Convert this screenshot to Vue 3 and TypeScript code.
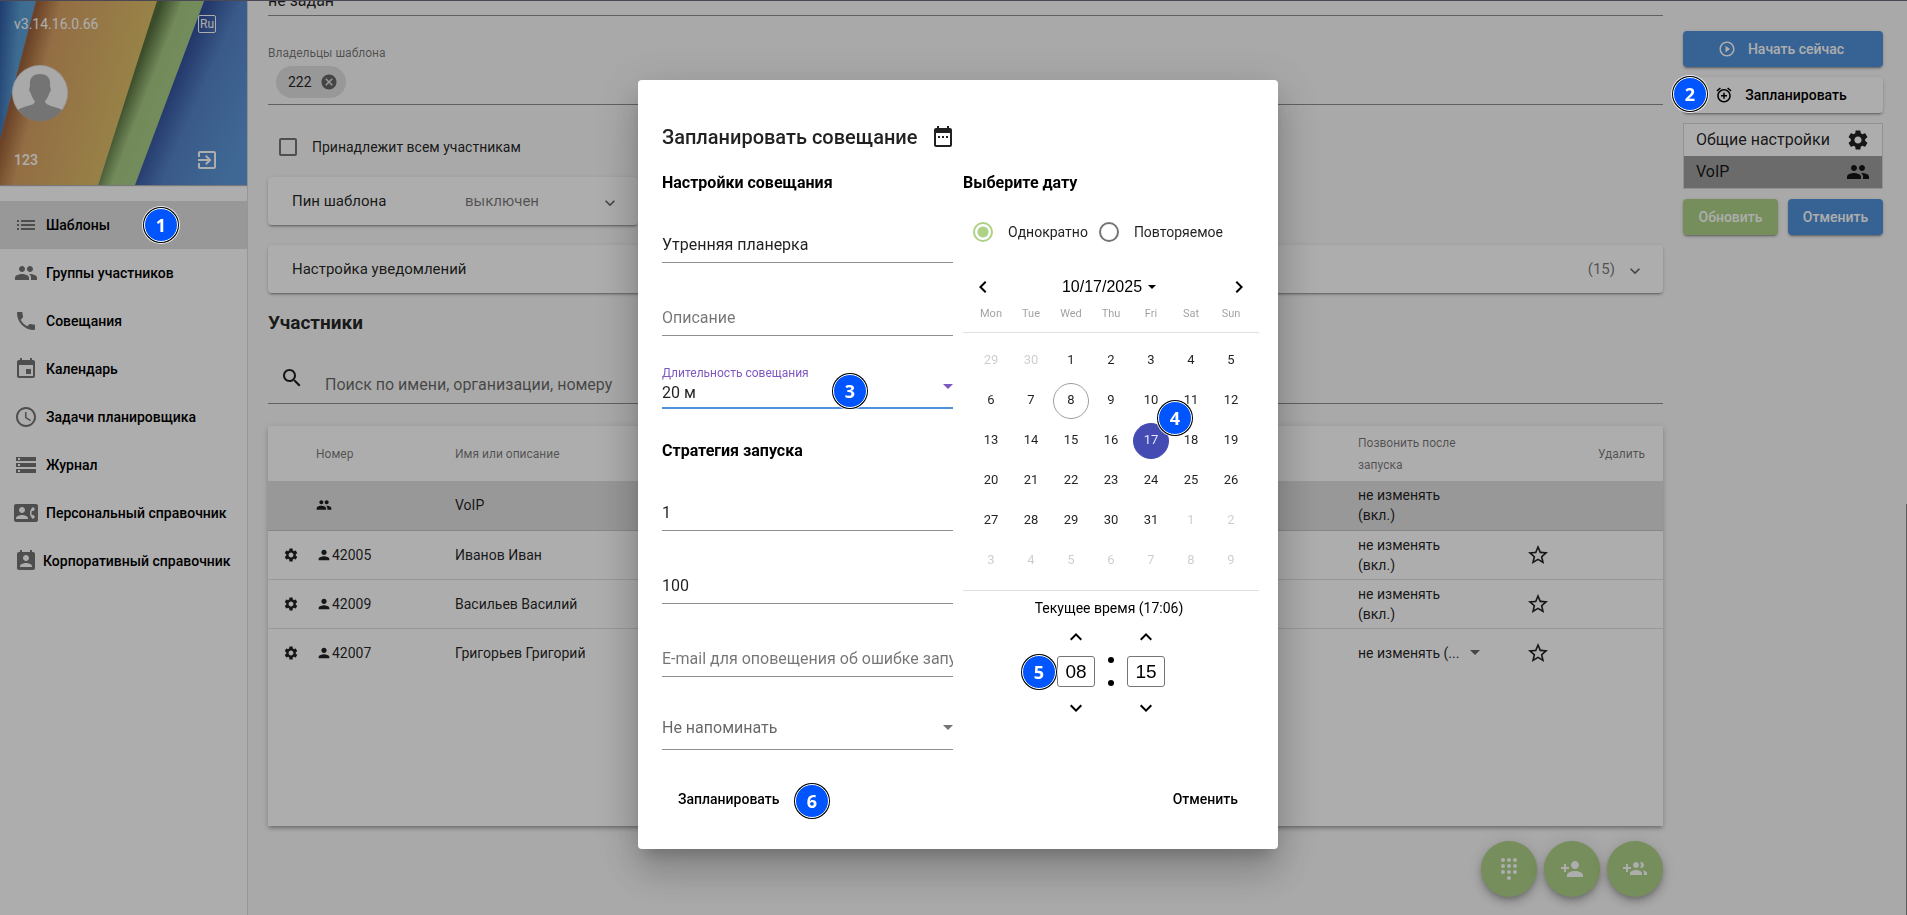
<script setup lang="ts">
import { ref } from 'vue'

const icons: Record<string, string> = {
  list: 'M3 13h2v-2H3v2zm0 4h2v-2H3v2zm0-8h2V7H3v2zm4 4h14v-2H7v2zm0 4h14v-2H7v2zM7 7v2h14V7H7z',
  group: 'M16 11c1.66 0 2.99-1.34 2.99-3S17.66 5 16 5c-1.66 0-3 1.34-3 3s1.34 3 3 3zm-8 0c1.66 0 2.99-1.34 2.99-3S9.66 5 8 5C6.34 5 5 6.34 5 8s1.34 3 3 3zm0 2c-2.33 0-7 1.17-7 3.5V19h14v-2.5c0-2.33-4.67-3.5-7-3.5zm8 0c-.29 0-.62.02-.97.05 1.16.84 1.97 1.97 1.97 3.45V19h6v-2.5c0-2.33-4.67-3.5-7-3.5z',
  phone: 'M20 15.5c-1.25 0-2.45-.2-3.57-.57-.35-.11-.74-.03-1.02.24l-2.2 2.2c-2.83-1.44-5.15-3.75-6.59-6.59l2.2-2.21c.28-.26.36-.65.25-1C8.7 6.45 8.5 5.25 8.5 4c0-.55-.45-1-1-1H4c-.55 0-1 .45-1 1 0 9.39 7.61 17 17 17 .55 0 1-.45 1-1v-3.5c0-.55-.45-1-1-1z',
  event: 'M17 12h-5v5h5v-5zM16 1v2H8V1H6v2H5c-1.11 0-1.99.9-1.99 2L3 19c0 1.1.89 2 2 2h14c1.1 0 2-.9 2-2V5c0-1.1-.9-2-2-2h-1V1h-2zm3 18H5V8h14v11z',
  clock: 'M11.99 2C6.47 2 2 6.48 2 12s4.47 10 9.99 10C17.52 22 22 17.52 22 12S17.52 2 11.99 2zM12 20c-4.42 0-8-3.58-8-8s3.58-8 8-8 8 3.58 8 8-3.58 8-8 8zm.5-13H11v6l5.25 3.15.75-1.23-4.5-2.67z',
  storage: 'M2 20h20v-4H2v4zm2-3h2v2H4v-2zM2 4v4h20V4H2zm4 3H4V5h2v2zm-4 7h20v-4H2v4zm2-3h2v2H4v-2z',
  contactPhone: 'M22 3H2C.9 3 0 3.9 0 5v14c0 1.1.9 2 2 2h20c1.1 0 1.99-.9 1.99-2L24 5c0-1.1-.9-2-2-2zM8 6c1.66 0 3 1.34 3 3s-1.34 3-3 3-3-1.34-3-3 1.34-3 3-3zm6 12H2v-1c0-2 4-3.1 6-3.1s6 1.1 6 3.1v1zm3.85-4h1.64L21 16l-1.99 1.99c-1.31-.98-2.28-2.38-2.73-3.99-.18-.64-.28-1.31-.28-2s.1-1.36.28-2c.45-1.62 1.42-3.01 2.73-3.99L21 8l-1.51 2h-1.64c-.22.63-.35 1.3-.35 2s.13 1.37.35 2z',
  contactCalendar: 'M19 3h-1V1h-2v2H8V1H6v2H5c-1.11 0-2 .9-2 2v14c0 1.1.89 2 2 2h14c1.1 0 2-.9 2-2V5c0-1.1-.9-2-2-2zm-7 3c1.66 0 3 1.34 3 3s-1.34 3-3 3-3-1.34-3-3 1.34-3 3-3zm6 12H6v-1c0-2 4-3.1 6-3.1s6 1.1 6 3.1v1z',
  exit: 'M10.09 15.59L11.5 17l5-5-5-5-1.41 1.41L12.67 11H3v2h9.67l-2.58 2.59zM19 3H5c-1.11 0-2 .9-2 2v4h2V5h14v14H5v-4H3v4c0 1.1.89 2 2 2h14c1.1 0 2-.9 2-2V5c0-1.1-.9-2-2-2z',
  cancel: 'M12 2C6.47 2 2 6.47 2 12s4.47 10 10 10 10-4.47 10-10S17.53 2 12 2zm5 13.59L15.59 17 12 13.41 8.41 17 7 15.59 10.59 12 7 8.41 8.41 7 12 10.59 15.59 7 17 8.41 13.41 12 17 15.59z',
  search: 'M15.5 14h-.79l-.28-.27C15.41 12.59 16 11.11 16 9.5 16 5.91 13.09 3 9.5 3S3 5.91 3 9.5 5.91 16 9.5 16c1.61 0 3.09-.59 4.23-1.57l.27.28v.79l5 4.99L20.49 19l-4.99-5zm-6 0C7.01 14 5 11.99 5 9.5S7.01 5 9.5 5 14 7.01 14 9.5 11.99 14 9.5 14z',
  gear: 'M19.14 12.94c.04-.3.06-.61.06-.94 0-.32-.02-.64-.07-.94l2.03-1.58c.18-.14.23-.41.12-.61l-1.92-3.32c-.12-.22-.37-.29-.59-.22l-2.39.96c-.5-.38-1.03-.7-1.62-.94l-.36-2.54c-.04-.24-.24-.41-.48-.41h-3.84c-.24 0-.43.17-.47.41l-.36 2.54c-.59.24-1.13.57-1.62.94l-2.39-.96c-.22-.08-.47 0-.59.22L2.74 8.87c-.12.21-.08.47.12.61l2.03 1.58c-.05.3-.09.63-.09.94s.02.64.07.94l-2.03 1.58c-.18.14-.23.41-.12.61l1.92 3.32c.12.22.37.29.59.22l2.39-.96c.5.38 1.03.7 1.62.94l.36 2.54c.05.24.24.41.48.41h3.84c.24 0 .44-.17.47-.41l.36-2.54c.59-.24 1.13-.56 1.62-.94l2.39.96c.22.08.47 0 .59-.22l1.92-3.32c.12-.22.07-.47-.12-.61l-2.01-1.58zM12 15.6c-1.98 0-3.6-1.62-3.6-3.6s1.62-3.6 3.6-3.6 3.6 1.62 3.6 3.6-1.62 3.6-3.6 3.6z',
  person: 'M12 12c2.21 0 4-1.79 4-4s-1.79-4-4-4-4 1.79-4 4 1.79 4 4 4zm0 2c-2.67 0-8 1.34-8 4v2h16v-2c0-2.66-5.33-4-8-4z',
  star: 'M22 9.24l-7.19-.62L12 2 9.19 8.63 2 9.24l5.46 4.73L5.82 21 12 17.27 18.18 21l-1.63-7.03L22 9.24zM12 15.4l-3.76 2.27 1-4.28-3.32-2.88 4.38-.38L12 6.1l1.71 4.04 4.38.38-3.32 2.88 1 4.28L12 15.4z',
  play: 'M10 16.5l6-4.5-6-4.5v9zM12 2C6.48 2 2 6.48 2 12s4.48 10 10 10 10-4.48 10-10S17.52 2 12 2zm0 18c-4.41 0-8-3.59-8-8s3.59-8 8-8 8 3.59 8 8-3.59 8-8 8z',
  alarm: 'M7.88 3.39L6.6 1.86 2 5.71l1.29 1.53 4.59-3.85zM22 5.72l-4.6-3.86-1.29 1.53 4.6 3.86L22 5.72zM12 4c-4.97 0-9 4.03-9 9s4.02 9 9 9c4.97 0 9-4.03 9-9s-4.03-9-9-9zm0 16c-3.87 0-7-3.13-7-7s3.13-7 7-7 7 3.13 7 7-3.13 7-7 7zm1-11h-2v3H8v2h3v3h2v-3h3v-2h-3V9z',
  dialpad: 'M12 19c-1.1 0-2 .9-2 2s.9 2 2 2 2-.9 2-2-.9-2-2-2zM6 1c-1.1 0-2 .9-2 2s.9 2 2 2 2-.9 2-2-.9-2-2-2zm0 6c-1.1 0-2 .9-2 2s.9 2 2 2 2-.9 2-2-.9-2-2-2zm0 6c-1.1 0-2 .9-2 2s.9 2 2 2 2-.9 2-2-.9-2-2-2zm12-8c1.1 0 2-.9 2-2s-.9-2-2-2-2 .9-2 2 .9 2 2 2zm-6 8c-1.1 0-2 .9-2 2s.9 2 2 2 2-.9 2-2-.9-2-2-2zm6 0c-1.1 0-2 .9-2 2s.9 2 2 2 2-.9 2-2-.9-2-2-2zm0-6c-1.1 0-2 .9-2 2s.9 2 2 2 2-.9 2-2-.9-2-2-2zm-6 0c-1.1 0-2 .9-2 2s.9 2 2 2 2-.9 2-2-.9-2-2-2zm0-6c-1.1 0-2 .9-2 2s.9 2 2 2 2-.9 2-2-.9-2-2-2z',
  personAdd: 'M15 12c2.21 0 4-1.79 4-4s-1.79-4-4-4-4 1.79-4 4 1.79 4 4 4zm-9-2V7H4v3H1v2h3v3h2v-3h3v-2H6zm9 4c-2.67 0-8 1.34-8 4v2h16v-2c0-2.66-5.33-4-8-4z',
  groupAdd: 'M8 10H5V7H3v3H0v2h3v3h2v-3h3v-2zm10 1c1.66 0 2.99-1.34 2.99-3S19.66 5 18 5c-.32 0-.63.05-.91.14.57.81.9 1.79.9 2.86s-.34 2.04-.9 2.86c.28.09.59.14.91.14zm-5 0c1.66 0 2.99-1.34 2.99-3S14.66 5 13 5c-1.66 0-3 1.34-3 3s1.34 3 3 3zm6.62 2.16c.83.73 1.38 1.66 1.38 2.84v2h3v-2c0-1.54-2.37-2.49-4.38-2.84zM13 13c-2 0-6 1-6 3v2h12v-2c0-2-4-3-6-3z',
  dateRange: 'M7 11h2v2H7v-2zm4 0h2v2h-2v-2zm4 0h2v2h-2v-2zM19 3h-1V1h-2v2H8V1H6v2H5c-1.11 0-1.99.9-1.99 2L3 20c0 1.1.89 2 2 2h14c1.1 0 2-.9 2-2V5c0-1.1-.9-2-2-2zm0 17H5V8h14v12z',
  down: 'M7.41 8.59L12 13.17l4.59-4.58L18 10l-6 6-6-6z',
  up: 'M7.41 15.41L12 10.83l4.59 4.58L18 14l-6-6-6 6z',
  left: 'M15.41 7.41L14 6l-6 6 6 6 1.41-1.41L10.83 12z',
  right: 'M8.59 16.59L13.17 12 8.59 7.41 10 6l6 6-6 6z',
}

interface NavItem { icon: string; label: string; active?: boolean; step?: number; long?: boolean }
const nav: NavItem[] = [
  { icon: 'list', label: 'Шаблоны', active: true, step: 1 },
  { icon: 'group', label: 'Группы участников' },
  { icon: 'phone', label: 'Совещания' },
  { icon: 'event', label: 'Календарь' },
  { icon: 'clock', label: 'Задачи планировщика' },
  { icon: 'storage', label: 'Журнал' },
  { icon: 'contactPhone', label: 'Персональный справочник' },
  { icon: 'contactCalendar', label: 'Корпоративный справочник', long: true },
]

const people = [
  { number: '42005', name: 'Иванов Иван', select: false },
  { number: '42009', name: 'Васильев Василий', select: false },
  { number: '42007', name: 'Григорьев Григорий', select: true },
]

const weekdays = ['Mon', 'Tue', 'Wed', 'Thu', 'Fri', 'Sat', 'Sun']
const days = Array.from({ length: 42 }, (_, i) => {
  const n = i - 1
  if (n < 1) return { n: n + 30, out: true }
  if (n > 31) return { n: n - 31, out: true }
  return { n, out: false }
})

const today = 8
const selected = ref(17)
const title = ref('Утренняя планерка')
const description = ref('')
const duration = ref('20 м')
const attempts = ref('1')
const interval = ref('100')
const email = ref('')
const remind = ref('Не напоминать')
const mode = ref('once')
const hours = ref('08')
const minutes = ref('15')
const shared = ref(false)
const query = ref('')
</script>

<template>
  <div class="page">
    <aside class="sidebar">
      <header class="banner">
        <svg class="art" viewBox="0 0 247 184" preserveAspectRatio="none" aria-hidden="true">
          <defs>
            <linearGradient id="sky" x1="0" y1="0" x2="1" y2="0.25">
              <stop offset="0" stop-color="#2f5ba5" /><stop offset="0.5" stop-color="#5b9fd6" /><stop offset="1" stop-color="#62a6da" />
            </linearGradient>
            <linearGradient id="sand" gradientUnits="userSpaceOnUse" x1="18" y1="80" x2="125" y2="108">
              <stop offset="0" stop-color="#a0643c" /><stop offset="0.2" stop-color="#d9a265" /><stop offset="1" stop-color="#e0c069" />
            </linearGradient>
            <linearGradient id="leaf" gradientUnits="userSpaceOnUse" x1="127" y1="90" x2="163" y2="104">
              <stop offset="0" stop-color="#56703e" /><stop offset="0.5" stop-color="#a9cb85" /><stop offset="1" stop-color="#abcf87" />
            </linearGradient>
            <linearGradient id="sea" gradientUnits="userSpaceOnUse" x1="168" y1="90" x2="250" y2="126">
              <stop offset="0" stop-color="#33529c" /><stop offset="0.35" stop-color="#5685ca" /><stop offset="1" stop-color="#5e9adb" />
            </linearGradient>
          </defs>
          <path fill="url(#sky)" d="M0 0H40L0 140Z" />
          <path fill="url(#sand)" d="M36 0H158L98 184H0V138Z" />
          <path fill="url(#leaf)" d="M157 0H204L136 184H98Z" />
          <path fill="url(#sea)" d="M204 0H247V184H135Z" />
        </svg>
        <div class="banner-row version">
          <span>v3.14.16.0.66</span>
          <button class="lang" type="button">Ru</button>
        </div>
        <svg class="avatar" viewBox="0 0 56 56" aria-hidden="true">
          <circle cx="28" cy="28" r="28" fill="#e4e4e4" />
          <circle cx="28" cy="28" r="27" fill="#fafafa" />
          <path fill="#ababab" d="M18 21c-1-8 3-12 10-12s11 4 10 12l1 4-2 4c-1 4-3 5-4 8 1 4 13 5 17 8A27 27 0 0 1 6 45c4-4 16-4 17-8-1-3-3-4-4-8l-2-4Z" />
        </svg>
        <div class="banner-row">
          <span>123</span>
          <button class="plain" type="button" aria-label="Выход"><svg class="i24" viewBox="0 0 24 24"><path :d="icons.exit" /></svg></button>
        </div>
      </header>
      <nav>
        <a v-for="n in nav" :key="n.label" href="#" class="nav-item" :class="{ active: n.active, long: n.long }">
          <svg class="i24" viewBox="0 0 24 24"><path :d="icons[n.icon]" /></svg>
          <span>{{ n.label }}</span>
          <b v-if="n.step" class="marker step-nav">{{ n.step }}</b>
        </a>
      </nav>
    </aside>

    <main>
      <div class="line-field first">не задан</div>
      <div class="owners">
        <span class="caption">Владельцы шаблона</span>
        <span class="chip">222<button class="plain" type="button" aria-label="Удалить владельца"><svg viewBox="0 0 24 24"><path :d="icons.cancel" /></svg></button></span>
      </div>
      <label class="check"><input v-model="shared" type="checkbox">Принадлежит всем участникам</label>
      <button type="button" class="panel half">
        <span class="panel-title">Пин шаблона</span><span class="muted">выключен</span>
        <svg class="i20" viewBox="0 0 24 24"><path :d="icons.down" /></svg>
      </button>
      <button type="button" class="panel">
        <span class="panel-title">Настройка уведомлений</span><span class="muted count">(15)</span>
        <svg class="i20" viewBox="0 0 24 24"><path :d="icons.down" /></svg>
      </button>
      <h2>Участники</h2>
      <div class="search">
        <svg class="i24" viewBox="0 0 24 24"><path :d="icons.search" /></svg>
        <input v-model="query" type="text" aria-label="Поиск" placeholder="Поиск по имени, организации, номеру">
      </div>
      <section class="card">
        <table>
          <thead>
            <tr>
              <th class="c-set"></th><th class="c-num">Номер</th><th>Имя или описание</th>
              <th class="c-call">Позвонить после<br>запуска</th><th class="c-fav"></th><th class="c-del">Удалить</th>
            </tr>
          </thead>
          <tbody>
            <tr class="current">
              <td></td>
              <td><svg class="i16" viewBox="0 0 24 24"><path :d="icons.group" /></svg></td>
              <td>VoIP</td><td class="call">не изменять<br>(вкл.)</td><td></td><td></td>
            </tr>
            <tr v-for="p in people" :key="p.number">
              <td class="set"><button class="plain" type="button" aria-label="Настройки участника"><svg class="i16" viewBox="0 0 24 24"><path :d="icons.gear" /></svg></button></td>
              <td><span class="num"><svg class="i16" viewBox="0 0 24 24"><path :d="icons.person" /></svg>{{ p.number }}</span></td>
              <td>{{ p.name }}</td>
              <td class="call">
                <button v-if="p.select" class="plain call-select" type="button">не изменять (...<i class="caret"></i></button>
                <template v-else>не изменять<br>(вкл.)</template>
              </td>
              <td class="fav"><button class="plain" type="button" aria-label="В избранное"><svg class="i24" viewBox="0 0 24 24"><path :d="icons.star" /></svg></button></td>
              <td></td>
            </tr>
          </tbody>
        </table>
      </section>
      <div class="fabs">
        <button v-for="f in ['dialpad', 'personAdd', 'groupAdd']" :key="f" type="button" :aria-label="f">
          <svg class="i24" viewBox="0 0 24 24"><path :d="icons[f]" /></svg>
        </button>
      </div>
    </main>

    <aside class="actions">
      <button type="button" class="btn blue lead"><svg viewBox="0 0 24 24"><path :d="icons.play" /></svg>Начать сейчас</button>
      <button type="button" class="btn white lead"><svg viewBox="0 0 24 24"><path :d="icons.alarm" /></svg>Запланировать<b class="marker step-plan">2</b></button>
      <ul>
        <li>Общие настройки<svg class="i24" viewBox="0 0 24 24"><path :d="icons.gear" /></svg></li>
        <li class="on">VoIP<svg class="i24" viewBox="0 0 24 24"><path :d="icons.group" /></svg></li>
      </ul>
      <div class="pair">
        <button type="button" class="btn green">Обновить</button>
        <button type="button" class="btn blue">Отменить</button>
      </div>
    </aside>
    <i class="thumb"></i>
  </div>

  <div class="backdrop"></div>

  <div class="overlay">
    <form class="dialog" role="dialog" aria-labelledby="dlg-title" @submit.prevent>
      <h1 id="dlg-title">Запланировать совещание<svg class="i24" viewBox="0 0 24 24"><path :d="icons.dateRange" /></svg></h1>
      <div class="columns">
        <div class="left">
          <h3>Настройки совещания</h3>
          <div class="fields">
            <div class="field"><input v-model="title" type="text" aria-label="Название"></div>
            <div class="field"><input v-model="description" type="text" aria-label="Описание" placeholder="Описание"></div>
            <div class="field focus">
              <label for="duration">Длительность совещания</label>
              <select id="duration" v-model="duration"><option>20 м</option></select>
              <i class="caret"></i>
              <b class="marker step-length">3</b>
            </div>
          </div>
          <h3 class="second">Стратегия запуска</h3>
          <div class="fields">
            <div class="field"><input v-model="attempts" type="text" aria-label="Количество попыток"></div>
            <div class="field"><input v-model="interval" type="text" aria-label="Интервал"></div>
            <div class="field"><input v-model="email" type="email" aria-label="E-mail" placeholder="E-mail для оповещения об ошибке запуска"></div>
            <div class="field remind">
              <select v-model="remind" aria-label="Напоминание"><option>Не напоминать</option></select>
              <i class="caret"></i>
            </div>
          </div>
        </div>
        <div class="right">
          <h3>Выберите дату</h3>
          <div class="radios">
            <label><input v-model="mode" type="radio" name="mode" value="once">Однократно</label>
            <label><input v-model="mode" type="radio" name="mode" value="repeat">Повторяемое</label>
          </div>
          <div class="cal-head">
            <button class="plain" type="button" aria-label="Предыдущий месяц"><svg class="i24" viewBox="0 0 24 24"><path :d="icons.left" /></svg></button>
            <button class="plain period" type="button">10/{{ selected }}/2025<i class="caret small"></i></button>
            <button class="plain" type="button" aria-label="Следующий месяц"><svg class="i24" viewBox="0 0 24 24"><path :d="icons.right" /></svg></button>
          </div>
          <div class="week"><span v-for="w in weekdays" :key="w">{{ w }}</span></div>
          <div class="days">
            <button
              v-for="(d, i) in days" :key="i" type="button" class="plain day"
              :class="{ out: d.out, today: !d.out && d.n === today, selected: !d.out && d.n === selected }"
            >{{ d.n }}<b v-if="!d.out && d.n === 17" class="marker step-day">4</b></button>
          </div>
          <p class="now">Текущее время (17:06)</p>
          <div class="time">
            <div class="spin">
              <button class="plain" type="button" aria-label="Час вперёд"><svg class="i24" viewBox="0 0 24 24"><path :d="icons.up" /></svg></button>
              <div class="box"><input v-model="hours" type="text" aria-label="Часы"><b class="marker step-time">5</b></div>
              <button class="plain" type="button" aria-label="Час назад"><svg class="i24" viewBox="0 0 24 24"><path :d="icons.down" /></svg></button>
            </div>
            <div class="colon"><i></i><i></i></div>
            <div class="spin">
              <button class="plain" type="button" aria-label="Минута вперёд"><svg class="i24" viewBox="0 0 24 24"><path :d="icons.up" /></svg></button>
              <div class="box"><input v-model="minutes" type="text" aria-label="Минуты"></div>
              <button class="plain" type="button" aria-label="Минута назад"><svg class="i24" viewBox="0 0 24 24"><path :d="icons.down" /></svg></button>
            </div>
          </div>
        </div>
      </div>
      <footer>
        <button type="submit" class="flat">Запланировать<b class="marker step-save">6</b></button>
        <button type="button" class="flat">Отменить</button>
      </footer>
    </form>
  </div>
</template>

<style>
body { margin: 0; background: #fafafa; overflow: hidden; }
</style>

<style scoped>
* { box-sizing: border-box; }
button, input, select { font: inherit; color: inherit; margin: 0; }
button { cursor: pointer; }
svg { fill: currentColor; flex: none; display: block; }
.i24 { width: 24px; height: 24px; }
.i20 { width: 20px; height: 20px; }
.i16 { width: 16px; height: 16px; }
.plain { background: none; border: 0; padding: 0; }

.page {
  position: relative;
  display: flex;
  height: 100vh;
  overflow: hidden;
  border-top: 1px solid #6c6a7c;
  font: 14px/20px Roboto, sans-serif;
  color: rgba(0, 0, 0, .87);
  background: #fafafa;
}
.thumb { position: absolute; right: 0; top: 55%; bottom: 0; width: 1px; background: #868686; }

.sidebar { width: 248px; flex: none; border-right: 1px solid #dedede; background: #fff; }
.banner {
  position: relative;
  height: 184px;
  padding: 11px 28px 13px 14px;
  display: flex;
  flex-direction: column;
  justify-content: space-between;
  color: #fff;
  box-shadow: 0 1px 1px rgba(0, 0, 0, .3);
}
.art { position: absolute; inset: 0; width: 100%; height: 100%; }
.banner-row { position: relative; display: flex; justify-content: space-between; align-items: center; height: 24px; font-weight: 500; }
.version { font-weight: 400; }
.lang { width: 18px; height: 18px; margin-right: 3px; padding: 0; border: 1px solid #fff; border-radius: 2px; background: none; font: 12px/14px Roboto, sans-serif; }
.avatar { position: relative; width: 56px; height: 56px; margin: 2px 0 0 -2px; }
nav { padding-top: 16px; }
.nav-item {
  position: relative;
  display: flex;
  align-items: center;
  gap: 8px;
  height: 48px;
  padding-left: 14px;
  color: #000;
  font-size: 14px;
  font-weight: 500;
  text-decoration: none;
}
.nav-item svg { color: #737373; }
.nav-item.long { gap: 5px; }
.active { background: #e0e0e0; }

main { flex: 1; min-width: 0; padding: 0 20px; display: flex; flex-direction: column; }
.first { height: 15px; flex: none; display: flex; align-items: flex-end; padding-bottom: 4px; border-bottom: 1px solid #8f8f8f; font-size: 16px; }
.owners { flex: none; height: 89px; border-bottom: 1px solid #8f8f8f; padding: 27px 0 6px; display: flex; flex-direction: column; justify-content: space-between; align-items: flex-start; }
.caption { font-size: 12px; color: rgba(0, 0, 0, .54); }
.chip { display: flex; align-items: center; gap: 8px; height: 32px; margin-left: 8px; padding: 0 8px 0 12px; border-radius: 16px; background: #e0e0e0; }
.chip svg { width: 18px; height: 18px; color: #666; }
.check { display: flex; align-items: center; gap: 15px; height: 36px; margin: 24px 0 12px 11px; flex: none; }
.check input { appearance: none; width: 18px; height: 18px; border: 2px solid #757575; border-radius: 2px; }
.panel {
  flex: none;
  display: flex;
  align-items: center;
  width: 100%;
  height: 48px;
  margin-bottom: 20px;
  padding: 0 18px 0 24px;
  border: 0;
  border-radius: 4px;
  background: #fff;
  text-align: left;
  box-shadow: 0 3px 1px -2px rgba(0, 0, 0, .2), 0 2px 2px rgba(0, 0, 0, .14), 0 1px 5px rgba(0, 0, 0, .12);
}
.panel.half { width: 370px; }
.panel-title { width: 173px; font-size: 15px; white-space: nowrap; }
.panel .muted { color: rgba(0, 0, 0, .54); font-size: 15px; }
.panel .count { margin-left: auto; margin-right: 10px; }
.panel.half .muted { margin-right: auto; }
.panel svg { color: #666; margin-top: 4px; }
h2 { flex: none; margin: 0; font-size: 19px; font-weight: 700; line-height: 20px; }
.search { flex: none; display: flex; align-items: center; gap: 21px; height: 71px; padding: 32px 0 0 12px; border-bottom: 1px solid #8f8f8f; }
.search svg { margin-bottom: 12px; }
.search input { flex: 1; height: 32px; padding: 0; border: 0; background: none; outline: 0; font-size: 16px; }
.search input::placeholder { color: rgba(0, 0, 0, .6); opacity: 1; }
.card { flex: none; height: 400px; margin-top: 22px; background: #fff; box-shadow: 0 3px 3px -2px rgba(0, 0, 0, .2), 0 3px 4px rgba(0, 0, 0, .14), 0 1px 8px rgba(0, 0, 0, .12); }
table { width: 100%; border-collapse: collapse; table-layout: fixed; }
th { height: 55px; padding: 0; text-align: left; font-size: 12px; font-weight: 400; line-height: 22px; color: rgba(0, 0, 0, .54); }
.c-set { width: 48px; }
.c-num { width: 139px; }
.c-call { width: 168px; }
.c-fav { width: 72px; }
.c-del { width: 65px; }
td { height: 49px; padding: 0; font-size: 14px; vertical-align: middle; border-bottom: 1px solid #e0e0e0; }
tr:last-child td { border-bottom: 0; }
.current { background: #e0e0e0; }
.current td { border-bottom-color: #c8c8c8; }
.set .plain, .fav .plain { display: block; }
.set svg { margin-left: 15px; }
.num { display: flex; align-items: center; }
.call-select { display: flex; align-items: center; gap: 11px; }
.fabs { display: flex; justify-content: flex-end; gap: 7px; margin-top: 15px; }
.fabs button { width: 56px; height: 56px; padding: 0 16px; border: 0; border-radius: 50%; background: #add187; color: #fff; box-shadow: 0 3px 5px -1px rgba(0, 0, 0, .2), 0 6px 10px rgba(0, 0, 0, .14), 0 1px 18px rgba(0, 0, 0, .12); }

.actions { flex: none; width: 224px; padding: 30px 24px 0 0; display: flex; flex-direction: column; gap: 10px; }
.btn {
  position: relative;
  display: flex;
  align-items: center;
  justify-content: center;
  gap: 12px;
  width: 100%;
  height: 36px;
  padding: 0;
  border: 0;
  border-radius: 4px;
  font-weight: 500;
  color: #fff;
  box-shadow: 0 3px 1px -2px rgba(0, 0, 0, .2), 0 2px 2px rgba(0, 0, 0, .14), 0 1px 5px rgba(0, 0, 0, .12);
}
.btn.lead { padding-right: 4px; }
.btn svg { width: 18px; height: 18px; }
.blue { background: #5292da; }
.green { background: #add187; }
.white { background: #fff; color: #000; }
.actions ul { margin: 0; padding: 0; list-style: none; border: 1px solid #d8d8d8; background: #fff; font-size: 16px; }
.actions li { display: flex; align-items: center; justify-content: space-between; height: 32px; padding: 0 12px; }
.actions .on { background: #9e9e9e; }
.pair { display: flex; gap: 10px; }

.backdrop { position: fixed; inset: 0; z-index: 10; background: rgba(0, 0, 0, .32); }
.overlay { position: fixed; inset: 0; z-index: 11; display: flex; align-items: center; justify-content: center; padding: 14px 0 0 9px; pointer-events: none; }
.dialog {
  width: 640px;
  padding: 24px 19px 32px 24px;
  border-radius: 4px;
  background: #fff;
  color: rgba(0, 0, 0, .87);
  font: 14px/20px Roboto, sans-serif;
  pointer-events: auto;
  box-shadow: 0 11px 15px -7px rgba(0, 0, 0, .2), 0 24px 38px 3px rgba(0, 0, 0, .14), 0 9px 46px 8px rgba(0, 0, 0, .12);
}
h1 { display: flex; align-items: center; gap: 14px; height: 66px; margin: 0 0 3px; font-size: 20px; font-weight: 500; }
.columns { display: flex; gap: 10px; }
.left { flex: 1; min-width: 0; }
.right { width: 296px; }
h3 { margin: 0; font-size: 16px; font-weight: 700; line-height: 20px; color: #000; }
.second { margin-top: 32px; }
.fields { display: flex; flex-direction: column; gap: 13px; padding-top: 10px; }
.field { position: relative; display: flex; align-items: flex-end; height: 60px; padding-bottom: 7px; border-bottom: 1px solid #8f8f8f; }
.field input, .field select { width: 100%; height: 20px; padding: 0; border: 0; outline: 0; background: none; appearance: none; font-size: 16px; line-height: 20px; }
.field input::placeholder { color: rgba(0, 0, 0, .54); opacity: 1; }
.focus { flex-direction: column; align-items: flex-start; justify-content: flex-end; padding-bottom: 4px; border-bottom: 2px solid #5292da; }
.focus label { font-size: 12px; color: #7e57c2; }
.remind { align-items: center; padding: 16px 0 0; color: rgba(0, 0, 0, .6); }
.caret { flex: none; border: 5px solid transparent; border-top-color: currentColor; border-bottom: 0; width: 0; height: 0; }
.call-select .caret { color: #666; }
.field .caret { position: absolute; right: 0; top: 35px; color: #757575; }
.focus .caret { color: #7e57c2; }

.radios { display: flex; gap: 11px; height: 40px; margin: 19px 0 0 10px; align-items: center; }
.radios label { display: flex; align-items: center; gap: 15px; font-size: 14px; }
.radios input { appearance: none; width: 20px; height: 20px; border: 2px solid #757575; border-radius: 50%; }
.radios input:checked { border-color: #add187; background: radial-gradient(circle, #add187 5px, transparent 6px); }
.cal-head { display: flex; justify-content: space-between; align-items: center; height: 24px; margin-top: 23px; padding: 0 8px; color: #000; }
.period { display: flex; align-items: center; gap: 6px; padding-right: 4px; font: 16px/20px "Liberation Sans", Arial, sans-serif; }
.caret.small { border-width: 4px; border-bottom: 0; }
.week, .days { display: grid; grid-template-columns: repeat(7, 40px); padding: 0 8px; text-align: center; }
.week { height: 34px; padding-top: 5px; font-size: 11px; color: rgba(0, 0, 0, .38); border-bottom: 1px solid #e0e0e0; }
.days { height: 258px; padding-top: 8px; padding-bottom: 9px; border-bottom: 1px solid #e0e0e0; }
.day { position: relative; z-index: 0; height: 38px; margin-bottom: 2px; font-size: 13px; }
.day.out { color: rgba(0, 0, 0, .2); }
.today::before, .selected::before { content: ''; position: absolute; z-index: -1; box-sizing: border-box; width: 36px; height: 36px; top: 2px; left: 2px; border-radius: 50%; border: 1px solid #9e9e9e; }
.day.selected { color: rgba(255, 255, 255, .87); z-index: 1; }
.selected::before { background: #444bb2; border-color: #444bb2; }
.now { margin: 7px 0 0; padding-right: 4px; text-align: center; color: #000; }
.time { display: flex; justify-content: center; color: #000; }
.spin { display: flex; flex-direction: column; align-items: center; width: 38px; padding-top: 7px; }
.box { position: relative; margin: 7px 0 9px; }
.box input { display: block; width: 38px; height: 31px; padding: 0; border: 1px solid #757575; border-radius: 3px; text-align: center; outline: 0; font: 19px/24px "Liberation Sans", Arial, sans-serif; }
.colon { display: flex; flex-direction: column; align-items: center; gap: 17px; width: 32px; padding-top: 39px; }
.colon i { width: 6px; height: 6px; border-radius: 50%; background: #000; }

footer { display: flex; justify-content: space-between; margin-top: 31px; padding-right: 5px; }
.flat { position: relative; height: 36px; padding: 0 16px; border: 0; background: none; font-weight: 500; color: #000; }

.marker {
  position: absolute;
  z-index: 20;
  width: 34px;
  height: 34px;
  border-radius: 50%;
  border: 1px solid #fff;
  background: #05f;
  box-shadow: 0 0 0 1px #000, 0 0 0 2px rgba(255, 255, 255, .8);
  color: #fff;
  font: 700 18px/32px "Open Sans", sans-serif;
  text-align: center;
}
.step-nav { left: 144px; top: 7px; }
.step-plan { left: -10px; top: 0; }
.step-length { left: 171px; bottom: -1px; }
.step-day { left: 27px; top: -20px; }
.step-time { left: -35px; top: -1px; }
.step-save { left: 133px; top: 3px; }
</style>
